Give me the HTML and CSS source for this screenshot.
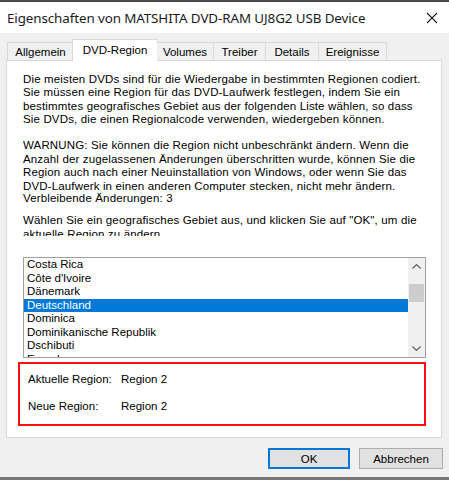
FILE: index.html
```html
<!DOCTYPE html>
<html lang="de">
<head>
<meta charset="utf-8">
<link rel="stylesheet" href="styles.css">
</head>
<body>
<div class="window">
  <div class="titlebar">
    <span class="title">Eigenschaften von MATSHITA DVD-RAM UJ8G2 USB Device</span>
    <svg class="close" width="12" height="12" viewBox="0 0 12 12"><path d="M1 1L11 11M11 1L1 11" stroke="#222" stroke-width="1.1" fill="none"/></svg>
  </div>
  <div class="content">
    <div class="tabs">
      <div class="tab t1">Allgemein</div>
      <div class="tab sel t2">DVD-Region</div>
      <div class="tab t3">Volumes</div>
      <div class="tab t4">Treiber</div>
      <div class="tab t5">Details</div>
      <div class="tab t6">Ereignisse</div>
    </div>
    <div class="panel">
      <div class="desc">
        <p class="p1">Die meisten DVDs sind für die Wiedergabe in bestimmten Regionen codiert.<br>Sie müssen eine Region für das DVD-Laufwerk festlegen, indem Sie ein<br>bestimmtes geografisches Gebiet aus der folgenden Liste wählen, so dass<br>Sie DVDs, die einen Regionalcode verwenden, wiedergeben können.</p>
        <p class="p2">WARNUNG: Sie können die Region nicht unbeschränkt ändern. Wenn die<br>Anzahl der zugelassenen Änderungen überschritten wurde, können Sie die<br>Region auch nach einer Neuinstallation von Windows, oder wenn Sie das<br>DVD-Laufwerk in einen anderen Computer stecken, nicht mehr ändern.</p>
        <p class="p3">Verbleibende Änderungen: 3</p>
        <p class="p4">Wählen Sie ein geografisches Gebiet aus, und klicken Sie auf "OK", um die<br>aktuelle Region zu ändern.</p>
      </div>
      <div class="listbox">
        <ul class="items">
          <li>Costa Rica</li>
          <li>Côte d'Ivoire</li>
          <li>Dänemark</li>
          <li class="selected">Deutschland</li>
          <li>Dominica</li>
          <li>Dominikanische Republik</li>
          <li>Dschibuti</li>
          <li>Ecuador</li>
        </ul>
        <div class="scrollbar">
          <svg class="arrow" width="17" height="17" viewBox="0 0 17 17"><path d="M4.5 10.5L8.5 6.5L12.5 10.5" stroke="#606060" stroke-width="1.2" fill="none"/></svg>
          <div class="track"><div class="thumb"></div></div>
          <svg class="arrow" width="17" height="17" viewBox="0 0 17 17"><path d="M4.5 6.5L8.5 10.5L12.5 6.5" stroke="#606060" stroke-width="1.2" fill="none"/></svg>
        </div>
      </div>
      <div class="regionbox">
        <div class="row"><span class="lbl">Aktuelle Region:</span><span>Region 2</span></div>
        <div class="row"><span class="lbl">Neue Region:</span><span>Region 2</span></div>
      </div>
    </div>
    <div class="buttons">
      <button class="btn ok">OK</button>
      <button class="btn">Abbrechen</button>
    </div>
  </div>
  <div class="bottomline"></div>
</div>
</body>
</html>
```
FILE: styles.css
```css
* { box-sizing: border-box; }
html, body { margin: 0; padding: 0; }
body {
  width: 449px;
  height: 480px;
  overflow: hidden;
  background: #f0f0f0;
  font-family: "Liberation Sans", Arial, sans-serif;
  font-size: 11.5px;
  color: #000;
}
.window { border-top: 2px solid #4a4a4a; }
.titlebar {
  height: 31px;
  background: #fff;
  display: flex;
  align-items: center;
  justify-content: space-between;
  padding-left: 7px;
  padding-right: 11px;
}
.title {
  font-family: "Noto Sans", "Open Sans", sans-serif;
  font-size: 13.4px;
  color: #1a1a1a;
  letter-spacing: -0.1px;
}
.content { padding-top: 6px; }
.tabs {
  display: flex;
  align-items: flex-end;
  height: 22px;
  margin-left: 7px;
  margin-bottom: -1px;
  position: relative;
  z-index: 1;
  font-size: 11.5px;
}
.tab {
  height: 18px;
  margin-bottom: 1px;
  border: 1px solid #d9d9d9;
  border-bottom: none;
  background: #f0f0f0;
  margin-left: -1px;
  display: flex;
  align-items: center;
  justify-content: center;
  padding-top: 1px;
}
.tab.t1 { width: 66px; margin-left: 0; border-right: none; }
.tab.sel {
  height: 22px;
  margin-bottom: 0;
  background: #fff;
  padding-top: 0;
  padding-bottom: 2px;
}
.tab.t2 { width: 86px; }
.tab.t3 { width: 57px; border-left: none; }
.tab.t4 { width: 53px; }
.tab.t5 { width: 54px; }
.tab.t6 { width: 69px; }
.panel {
  margin-left: 6px;
  width: 436px;
  height: 378px;
  border: 1px solid #d9d9d9;
  background: #fff;
  padding: 0 15px 0 16px;
}
.desc {
  margin-top: 12px;
  height: 163px;
  overflow: hidden;
  line-height: 13.4px;
  font-size: 11.5px;
  letter-spacing: 0.15px;
  white-space: nowrap;
}
.desc p { margin: 0; }
.desc .p2 { margin-top: 12.7px; }
.desc .p3 { margin-top: -1px; }
.desc .p4 { margin-top: 9px; }
.listbox {
  margin-top: 21px;
  height: 101px;
  border: 1px solid #a0a0a0;
  display: flex;
  overflow: hidden;
}
.items {
  list-style: none;
  margin: 0;
  padding: 0;
  flex: 1;
  overflow: hidden;
}
.items li {
  height: 13.5px;
  line-height: 13.5px;
  padding-left: 3px;
  white-space: nowrap;
}
.items li.selected { background: #0078d7; color: #fff; }
.scrollbar {
  width: 17px;
  background: #f0f0f0;
  display: flex;
  flex-direction: column;
}
.arrow { display: block; flex: none; }
.track { flex: 1; padding-top: 9px; }
.thumb { margin: 0 1px; height: 18px; background: #cdcdcd; }
.regionbox {
  margin-top: 4px;
  margin-left: -5px;
  height: 64px;
  border: 2px solid #ff1010;
  padding: 1.5px 0 0 8px;
}
.row { display: flex; height: 27px; line-height: 27px; }
.lbl { width: 93px; }
.buttons {
  display: flex;
  justify-content: flex-end;
  gap: 9px;
  margin-top: 10px;
  padding-right: 6px;
}
.btn {
  width: 84px;
  height: 21px;
  background: #e1e1e1;
  border: 1px solid #adadad;
  font-family: "Liberation Sans", Arial, sans-serif;
  font-size: 11.5px;
  color: #000;
  padding: 0;
}
.btn.ok { width: 82px; border: 2px solid #0078d7; }
.bottomline {
  margin-top: 8px;
  height: 3px;
  background: #777;
}
```
